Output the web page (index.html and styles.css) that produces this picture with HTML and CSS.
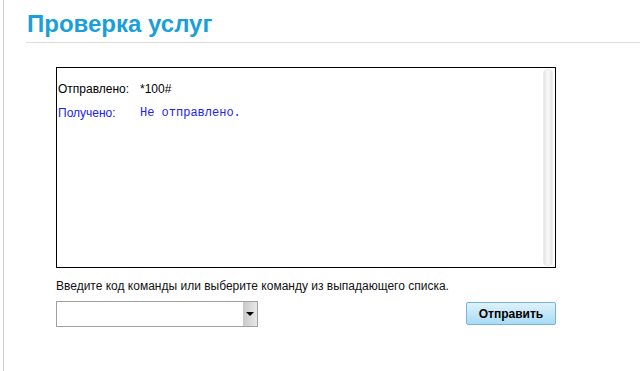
FILE: index.html
```html
<!DOCTYPE html>
<html lang="ru">
<head>
    <meta charset="UTF-8">
    <title>Проверка услуг</title>
    <link rel="stylesheet" href="styles.css">
</head>
<body>
    <div class="stranica">
        <h1 class="zagolovok">Проверка услуг</h1>
        <div class="soderzhanie">
            <div class="okno">
                <div class="tekst">
                    <div class="stroka"><span class="metka">Отправлено:</span><span>*100#</span></div>
                    <div class="stroka poluch"><span class="metka">Получено:</span><span class="otvet">Не отправлено.</span></div>
                </div>
                <div class="polosa"></div>
            </div>
            <p class="podskazka">Введите код команды или выберите команду из выпадающего списка.</p>
            <div class="panel">
                <div class="spisok">
                    <div class="pole"></div>
                    <div class="strelka"></div>
                </div>
                <button class="knopka">Отправить</button>
            </div>
        </div>
    </div>
</body>
</html>
```

FILE: styles.css
```css
body {
    margin: 0;
    font-family: Arial, "Liberation Sans", sans-serif;
    background: #fff;
    color: #000;
}
.stranica {
    margin-left: 3px;
    border-left: 1px solid #d0d0d0;
    height: 371px;
    padding-left: 22px;
    padding-top: 10px;
    box-sizing: border-box;
}
.zagolovok {
    margin: 0;
    font-size: 24px;
    font-weight: bold;
    color: #1a9fd8;
    line-height: 28px;
    padding-left: 1px;
    padding-bottom: 4px;
    border-bottom: 1px solid #dcdcdc;
}
.soderzhanie {
    padding-left: 30px;
    padding-top: 24px;
}
.okno {
    width: 498px;
    height: 199px;
    border: 1px solid #000;
    display: flex;
    justify-content: space-between;
}
.tekst {
    padding: 14px 0 0 1px;
    font-size: 12px;
}
.stroka {
    display: flex;
    height: 14px;
    line-height: 14px;
}
.poluch {
    margin-top: 10px;
    color: #2222ee;
}
.metka {
    width: 82px;
}
.otvet {
    font-family: "Courier New", "Liberation Mono", monospace;
    font-size: 12px;
}
.polosa {
    width: 8px;
    margin: 1px 2px 1px 0;
    border-radius: 4px;
    background: linear-gradient(to right, #e4e4e4, #fafafa 50%, #e4e4e4);
    border: 1px solid #ececec;
}
.podskazka {
    margin: 11px 0 0 0;
    font-size: 12px;
    color: #111;
    line-height: 14px;
}
.panel {
    display: flex;
    justify-content: space-between;
    width: 500px;
    margin-top: 8px;
}
.spisok {
    display: flex;
    width: 200px;
    height: 24px;
    border: 1px solid #a0a0a0;
}
.pole {
    flex: 1;
    background: #fff;
}
.strelka {
    width: 14px;
    background: linear-gradient(to right, #c8c8c8, #e8e8e8);
    position: relative;
}
.strelka::after {
    content: "";
    position: absolute;
    left: 3px;
    top: 10px;
    border-left: 4px solid transparent;
    border-right: 4px solid transparent;
    border-top: 4px solid #000;
}
.knopka {
    width: 90px;
    height: 23px;
    margin-top: 1px;
    border: 1px solid #7ab3d6;
    border-radius: 2px;
    background: linear-gradient(to bottom, #dff2fc, #a8dbf6);
    font-family: Arial, "Liberation Sans", sans-serif;
    font-size: 12px;
    font-weight: bold;
    color: #000;
    padding: 0;
}
```
